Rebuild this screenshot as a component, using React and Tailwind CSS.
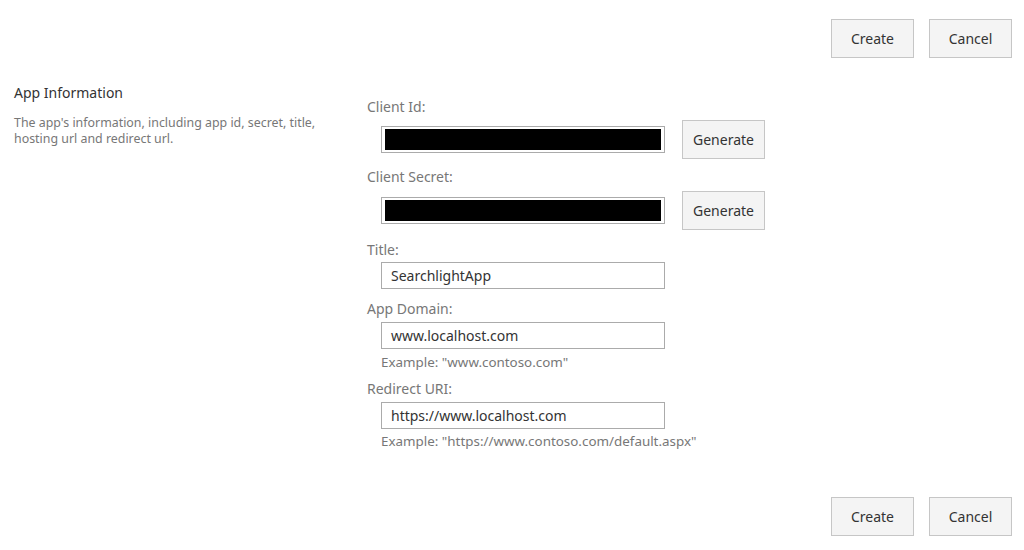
import React from 'react';

const font = { fontFamily: '"Segoe UI", "Noto Sans", "Open Sans", sans-serif' };

const Btn = ({ children }) => (
  <button className="w-[83px] h-[39px] border border-[#c6c6c6] bg-[#f4f4f4] text-[14px] text-[#333]">
    {children}
  </button>
);

const Label = ({ children, className = '' }) => (
  <div className={`h-[20px] leading-[20px] text-[14px] text-[#777] ${className}`}>{children}</div>
);

const TextBox = ({ value, redacted }) => (
  <div className="ml-[14px] w-[284px] h-[27px] border border-[#ababab] bg-white px-[3px] py-[2px] flex items-center">
    {redacted ? (
      <div className="w-full h-full bg-black" />
    ) : (
      <span className="pl-[6px] text-[14px] text-[#333]">{value}</span>
    )}
  </div>
);

const Hint = ({ children, className = '' }) => (
  <div className={`ml-[14px] h-[20px] leading-[20px] text-[13.4px] text-[#777] ${className}`}>{children}</div>
);

export default function App() {
  return (
    <div className="w-[1024px] h-[550px] bg-white overflow-hidden" style={font}>
      <div className="flex justify-end gap-[15px] pr-[12px] pt-[19px]">
        <Btn>Create</Btn>
        <Btn>Cancel</Btn>
      </div>

      <div className="flex mt-[25px]">
        <div className="w-[367px] pl-[14px]">
          <div className="text-[14px] leading-[20px] text-[#333]">App Information</div>
          <div className="mt-[12px] w-[330px] text-[12.4px] leading-[16px] text-[#777]">
            The app's information, including app id, secret, title, hosting url and redirect url.
          </div>
        </div>

        <div className="flex flex-col pt-[14px]">
          <Label>Client Id:</Label>
          <div className="flex items-center mt-[3px]">
            <TextBox redacted />
            <div className="ml-[17px]"><Btn>Generate</Btn></div>
          </div>

          <Label className="mt-[8px]">Client Secret:</Label>
          <div className="flex items-center mt-[4px]">
            <TextBox redacted />
            <div className="ml-[17px]"><Btn>Generate</Btn></div>
          </div>

          <Label className="mt-[10px]">Title:</Label>
          <div className="mt-[2px]"><TextBox value="SearchlightApp" /></div>

          <Label className="mt-[10px]">App Domain:</Label>
          <div className="mt-[3px]"><TextBox value="www.localhost.com" /></div>
          <Hint className="mt-[3px]">Example: "www.contoso.com"</Hint>

          <Label className="mt-[7px]">Redirect URI:</Label>
          <div className="mt-[3px]"><TextBox value="https://www.localhost.com" /></div>
          <Hint className="mt-[2px]">Example: "https://www.contoso.com/default.aspx"</Hint>
        </div>
      </div>

      <div className="flex justify-end gap-[15px] pr-[12px] mt-[46px]">
        <Btn>Create</Btn>
        <Btn>Cancel</Btn>
      </div>
    </div>
  );
}
